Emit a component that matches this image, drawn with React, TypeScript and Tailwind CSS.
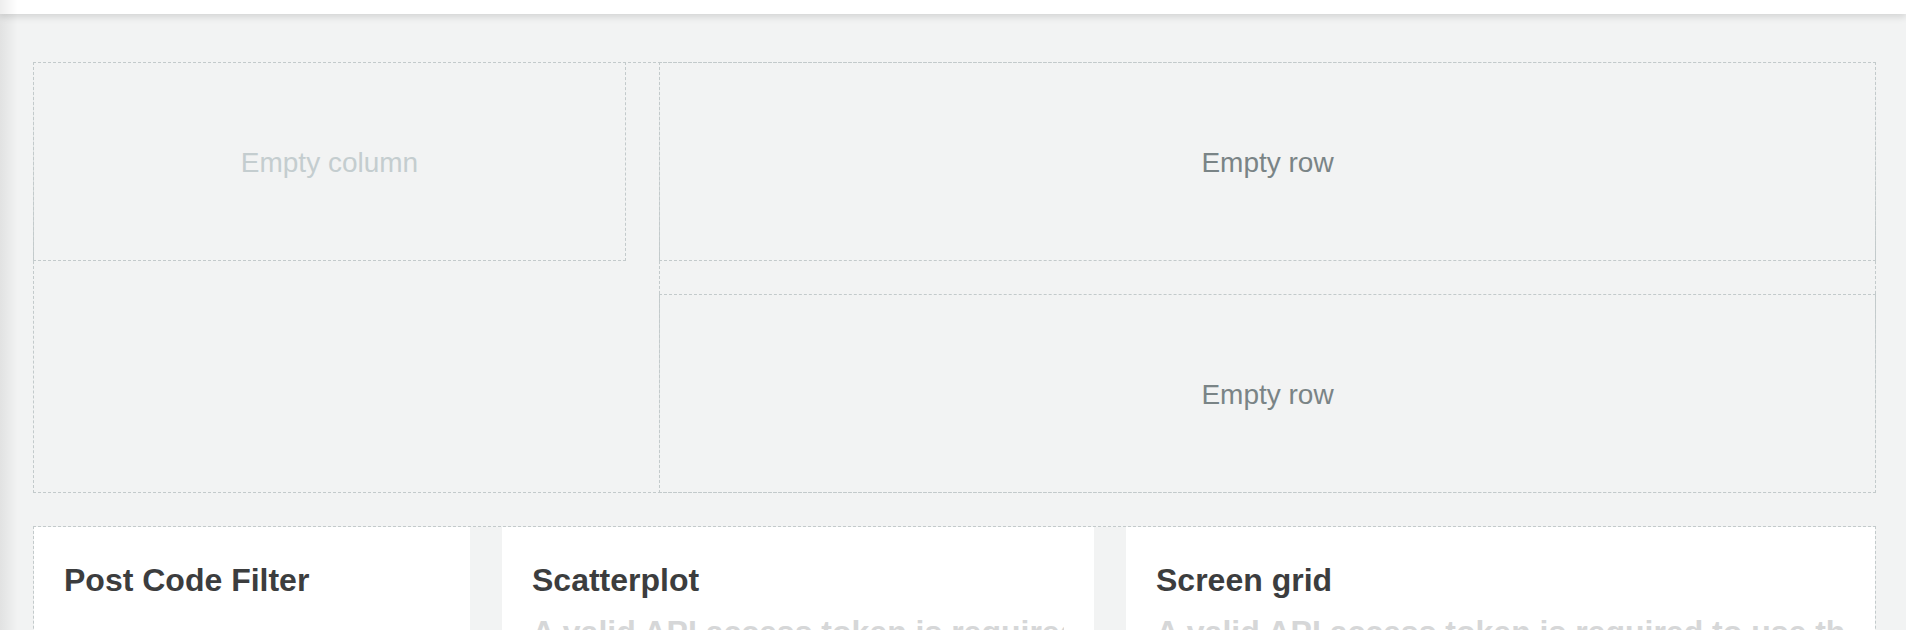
import React from "react";

const dashed = "border border-dashed border-[#c3cacb]";

function Card({ title, note, className }: { title: string; note?: string; className: string }) {
  return (
    <div className={`bg-white pt-[34px] px-[30px] h-[320px] overflow-hidden ${className}`}>
      <h2 className="text-[32px] leading-[38px] font-bold text-[#3c3d3e] whitespace-nowrap">{title}</h2>
      {note && (
        <p className="mt-[14px] text-[32px] leading-[38px] font-bold text-[#d6d7d8] whitespace-nowrap overflow-hidden">
          {note}
        </p>
      )}
    </div>
  );
}

export default function App() {
  return (
    <div className="relative min-h-screen h-[630px] overflow-hidden bg-[#f2f3f3] font-['Liberation_Sans',Arial,sans-serif]">
      <div className="relative z-10 h-[14px] bg-white shadow-[0_3px_7px_rgba(0,0,0,0.13)]" />
      <div className="pointer-events-none absolute inset-y-0 left-0 z-20 w-[18px] bg-gradient-to-r from-black/[0.07] to-transparent" />

      <div className="pl-[33px] pr-[30px] pt-[48px]">
        <div className={`flex h-[431px] gap-[33px] ${dashed}`}>
          <div className={`-ml-px -mt-px flex h-[199px] w-[593px] shrink-0 items-center justify-center pt-[2px] ${dashed}`}>
            <span className="text-[28px] text-[#c4cdcf]">Empty column</span>
          </div>
          <div className={`-my-px -mr-px flex flex-1 flex-col justify-between ${dashed}`}>
            <div className={`-mx-px -mt-px flex h-[199px] items-center justify-center pt-[2px] ${dashed}`}>
              <span className="text-[28px] text-[#7a8486]">Empty row</span>
            </div>
            <div className={`-mx-px -mb-px flex h-[199px] items-center justify-center pt-[2px] ${dashed}`}>
              <span className="text-[28px] text-[#7a8486]">Empty row</span>
            </div>
          </div>
        </div>

        <div className={`mt-[33px] flex gap-[32px] ${dashed}`}>
          <Card title="Post Code Filter" className="w-[436px] shrink-0" />
          <Card
            title="Scatterplot"
            note="A valid API access token is required to use the map."
            className="w-[592px] shrink-0"
          />
          <Card
            title="Screen grid"
            note="A valid API access token is required to use the map."
            className="flex-1 min-w-0"
          />
        </div>
      </div>
    </div>
  );
}
